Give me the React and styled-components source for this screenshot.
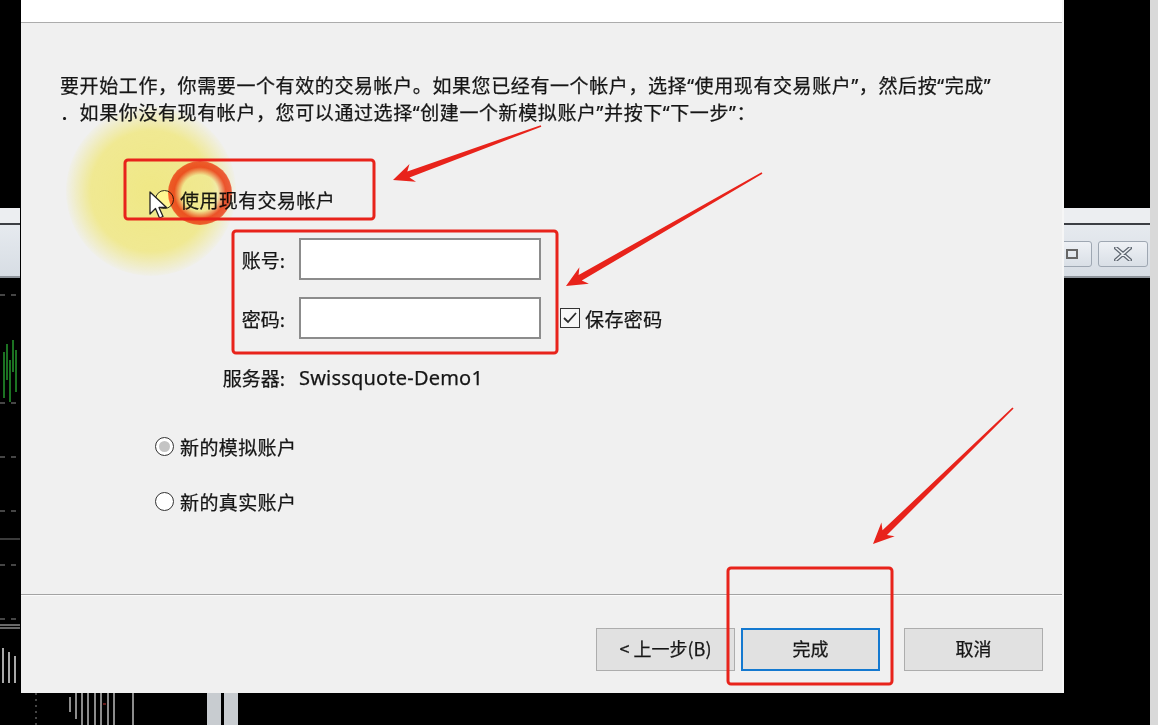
import React from "react";
import styled, { createGlobalStyle } from "styled-components";

const GlobalStyle = createGlobalStyle`
  html, body {
    margin: 0;
    padding: 0;
    background: #000;
    overflow: hidden;
  }
  body {
    font-family: "Noto Sans CJK SC", "Noto Sans", sans-serif;
    color: #161616;
    -webkit-text-stroke: 0.25px #161616;
  }
`;

const Desktop = styled.div`
  position: relative;
  width: 1158px;
  height: 725px;
  overflow: hidden;
  background: #000;
`;

const ChartLayer = styled.svg`
  position: absolute;
  inset: 0;
`;

const SideWindow = styled.div`
  position: absolute;
  top: 208px;
  left: ${(p) => p.$left}px;
  width: ${(p) => p.$width}px;
  height: 70px;
  display: flex;
  flex-direction: column;
  z-index: 1;
`;

const WinTop = styled.div`
  height: 15px;
  background: #eceef1;
`;

const WinRule = styled.div`
  height: 2px;
  background: #3c3f44;
`;

const WinBar = styled.div`
  flex: 1;
  display: flex;
  align-items: flex-start;
  justify-content: flex-end;
  gap: 6px;
  padding: 16px 10px 0 0;
  background: linear-gradient(#e6eaef, #d7dde4);
  border-bottom: 2px solid #8f959c;
`;

const CaptionButton = styled.div`
  width: ${(p) => p.$w}px;
  height: 26px;
  box-sizing: border-box;
  border: 1px solid #9ea7b2;
  border-radius: 3px;
  background: linear-gradient(#eef1f5, #d9dfe6);
  display: flex;
  align-items: center;
  justify-content: center;
`;

const EdgeStrip = styled.div`
  position: absolute;
  top: 0;
  right: 0;
  width: 8px;
  height: 100%;
  background: #d9d9d9;
  z-index: 1;
`;

const Dialog = styled.div`
  position: absolute;
  left: 21px;
  top: 0;
  width: 1041px;
  height: 693px;
  display: flex;
  flex-direction: column;
  background: #f0f0f0;
  border-right: 2px solid #f6f6f6;
  z-index: 2;
`;

const Header = styled.div`
  height: 22px;
  background: #fff;
  border-bottom: 1px solid #acacac;
`;

const Body = styled.div`
  flex: 1;
  display: flex;
  flex-direction: column;
  padding: 50px 0 0 39px;
  font-size: 19px;
`;

const Intro = styled.div`
  font-family: "Noto Sans", "Noto Sans CJK SC", sans-serif;
  line-height: 27px;
  letter-spacing: 0.6px;
  white-space: nowrap;
`;

const OptionRow = styled.label`
  display: flex;
  align-items: center;
  gap: 6px;
  height: 27px;
  margin-left: 95px;
  margin-top: ${(p) => p.$top}px;
  letter-spacing: 0.4px;
`;

const Radio = styled.span`
  width: 19px;
  height: 19px;
  box-sizing: border-box;
  border-radius: 50%;
  border: 1.5px solid #333;
  background: #fff;
  display: flex;
  align-items: center;
  justify-content: center;
  &::after {
    content: "";
    width: 11px;
    height: 11px;
    border-radius: 50%;
    background: ${(p) => (p.$on ? p.$dot : "transparent")};
  }
`;

const Fields = styled.div`
  display: flex;
  flex-direction: column;
  gap: 17px;
  margin: 25px 0 0 160px;
`;

const FieldRow = styled.div`
  display: flex;
  align-items: center;
  height: ${(p) => p.$h}px;
  margin-top: ${(p) => p.$top || 0}px;
`;

const FieldLabel = styled.span`
  width: 65px;
  margin-right: 14px;
  text-align: right;
  white-space: nowrap;
`;

const TextBox = styled.div`
  width: 242px;
  height: 42px;
  box-sizing: border-box;
  border: 2px solid #8c8c8c;
  background: #fff;
`;

const CheckRow = styled.label`
  display: flex;
  align-items: center;
  gap: 5px;
  margin-left: 19px;
  letter-spacing: 0.4px;
`;

const CheckBox = styled.span`
  width: 20px;
  height: 20px;
  box-sizing: border-box;
  border: 1.5px solid #333;
  background: #f7f7f7;
  display: flex;
  align-items: center;
  justify-content: center;
`;

const ServerName = styled.span`
  font-family: "Noto Sans", "Open Sans", sans-serif;
  font-size: 20px;
  letter-spacing: 0.2px;
`;

const Footer = styled.div`
  height: 99px;
  box-sizing: border-box;
  border-top: 1px solid #a3a3a3;
  box-shadow: inset 0 1px 0 #fbfbfb;
  display: flex;
  align-items: flex-start;
  justify-content: flex-end;
  padding: 33px 19px 0 0;
`;

const Button = styled.button`
  width: 139px;
  height: 43px;
  margin-left: ${(p) => p.$gap || 0}px;
  box-sizing: border-box;
  border: ${(p) => (p.$primary ? "2px solid #1479d0" : "1px solid #adadad")};
  background: #e1e1e1;
  font-family: "Noto Sans CJK SC", sans-serif;
  font-size: 18px;
  color: #161616;
  -webkit-text-stroke: 0.25px #161616;
  padding: 0 0 3px;
`;

const Highlight = styled.div`
  position: absolute;
  left: 66px;
  top: 106px;
  width: 170px;
  height: 170px;
  border-radius: 50%;
  background: radial-gradient(
    circle,
    rgba(255, 246, 130, 0.9) 0%,
    rgba(255, 246, 130, 0.8) 50%,
    rgba(255, 246, 130, 0) 72%
  );
  mix-blend-mode: multiply;
  z-index: 3;
`;

const ClickRing = styled.div`
  position: absolute;
  left: 168px;
  top: 161px;
  width: 64px;
  height: 64px;
  border-radius: 50%;
  background: radial-gradient(
    circle,
    rgba(255, 80, 40, 0) 40%,
    rgba(250, 72, 36, 0.9) 57%,
    rgba(250, 72, 36, 0.85) 68%,
    rgba(255, 80, 40, 0) 86%
  );
  mix-blend-mode: multiply;
  z-index: 4;
`;

const Pointer = styled.svg`
  position: absolute;
  left: 149px;
  top: 191px;
  z-index: 5;
`;

const Marks = styled.svg`
  position: absolute;
  inset: 0;
  z-index: 6;
  pointer-events: none;
`;

const RED = "#e8231b";

function arrowPoints(x1, y1, x2, y2, head = 21, wing = 9.5, neck = 3.2, tail = 0.8) {
  const dx = x2 - x1;
  const dy = y2 - y1;
  const len = Math.hypot(dx, dy);
  const ux = dx / len;
  const uy = dy / len;
  const nx = -uy;
  const ny = ux;
  const bx = x2 - ux * head;
  const by = y2 - uy * head;
  const kx = x2 - ux * head * 0.78;
  const ky = y2 - uy * head * 0.78;
  const pts = [
    [x1 + nx * tail, y1 + ny * tail],
    [kx + nx * neck, ky + ny * neck],
    [bx + nx * wing, by + ny * wing],
    [x2, y2],
    [bx - nx * wing, by - ny * wing],
    [kx - nx * neck, ky - ny * neck],
    [x1 - nx * tail, y1 - ny * tail],
  ];
  return pts.map((p) => p.map((v) => v.toFixed(1)).join(",")).join(" ");
}

const arrows = [
  [541, 126, 393, 180],
  [762, 173, 566, 286],
  [1013, 408, 873, 544],
];

const boxes = [
  [125, 160, 249, 59],
  [233, 231, 324, 122],
  [728, 568, 164, 116],
];

const greenCandles = [
  [4, 352, 398], [7, 344, 380], [10, 360, 402], [13, 340, 372], [16, 350, 392],
];

const whiteCandles = [
  [70, 697, 712], [76, 693, 719], [82, 693, 725], [88, 693, 725], [95, 693, 725],
  [101, 693, 725], [108, 693, 725], [114, 693, 725], [133, 693, 725],
];

function Chart() {
  return (
    <ChartLayer width="1158" height="725">
      {[295, 403, 457, 511, 565, 619].map((y) => (
        <line key={y} x1="0" y1={y} x2="20" y2={y} stroke="#8a8a8a" strokeDasharray="5 6" />
      ))}
      <line x1="0" y1="539" x2="20" y2="539" stroke="#777" />
      <line x1="0" y1="625" x2="20" y2="625" stroke="#cfcfcf" />
      <line x1="0" y1="628" x2="20" y2="628" stroke="#cfcfcf" />
      {greenCandles.map(([x, a, b]) => (
        <line key={x} x1={x} y1={a} x2={x} y2={b} stroke="#2fbf3a" strokeWidth="1.2" />
      ))}
      {[3, 9, 15].map((x, i) => (
        <line key={x} x1={x} y1={648 + i * 4} x2={x} y2={683} stroke="#e0e0e0" strokeWidth="1.5" />
      ))}
      <line x1="36" y1="693" x2="36" y2="725" stroke="#888" strokeDasharray="2 4" />
      {whiteCandles.map(([x, a, b]) => (
        <line key={x} x1={x} y1={a} x2={x} y2={b} stroke="#d8d8d8" strokeWidth="1.3" />
      ))}
      <line x1="103" y1="704" x2="106" y2="704" stroke="#c33" />
      <rect x="207" y="693" width="14" height="32" fill="#c8ccd0" />
      <rect x="224" y="693" width="14" height="32" fill="#c8ccd0" />
    </ChartLayer>
  );
}

export default function App() {
  return (
    <Desktop>
      <GlobalStyle />
      <Chart />

      <SideWindow $left={0} $width={20}>
        <WinTop />
        <WinRule />
        <WinBar />
      </SideWindow>

      <SideWindow $left={1030} $width={128}>
        <WinTop />
        <WinRule />
        <WinBar>
          <CaptionButton $w={40}>
            <svg width="12" height="10" viewBox="0 0 12 10">
              <rect x="1" y="1" width="10" height="8" fill="none" stroke="#666" strokeWidth="2" />
            </svg>
          </CaptionButton>
          <CaptionButton $w={50}>
            <svg width="18" height="14" viewBox="0 0 18 14">
              <path d="M2 1 L16 13 M16 1 L2 13" stroke="#5e6670" strokeWidth="4" strokeLinecap="round" />
              <path d="M2 1 L16 13 M16 1 L2 13" stroke="#eef1f5" strokeWidth="1.6" strokeLinecap="round" />
            </svg>
          </CaptionButton>
        </WinBar>
      </SideWindow>

      <EdgeStrip />

      <Dialog>
        <Header />
        <Body>
          <Intro>
            <div>要开始工作，你需要一个有效的交易帐户。如果您已经有一个帐户，选择“使用现有交易账户”，然后按“完成”</div>
            <div>．如果你没有现有帐户，您可以通过选择“创建一个新模拟账户”并按下“下一步”：</div>
          </Intro>

          <OptionRow $top={59}>
            <Radio />
            使用现有交易帐户
          </OptionRow>

          <Fields>
            <FieldRow $h={42}>
              <FieldLabel>账号:</FieldLabel>
              <TextBox />
            </FieldRow>
            <FieldRow $h={42}>
              <FieldLabel>密码:</FieldLabel>
              <TextBox />
              <CheckRow>
                <CheckBox>
                  <svg width="16" height="14" viewBox="0 0 16 14">
                    <path d="M2 7 L6 11 L14 2" fill="none" stroke="#2a2a2a" strokeWidth="1.8" />
                  </svg>
                </CheckBox>
                保存密码
              </CheckRow>
            </FieldRow>
            <FieldRow $h={27} $top={8}>
              <FieldLabel>服务器:</FieldLabel>
              <ServerName>Swissquote-Demo1</ServerName>
            </FieldRow>
          </Fields>

          <OptionRow $top={42}>
            <Radio $on $dot="#c4c4c4" />
            新的模拟账户
          </OptionRow>
          <OptionRow $top={28}>
            <Radio />
            新的真实账户
          </OptionRow>
        </Body>

        <Footer>
          <Button>&lt; 上一步(B)</Button>
          <Button $primary $gap={6}>完成</Button>
          <Button $gap={24}>取消</Button>
        </Footer>
      </Dialog>

      <Highlight />
      <ClickRing />
      <Pointer width="20" height="30" viewBox="0 0 20 30">
        <path
          d="M1 1 L1 23 L6.5 17.5 L10.5 27 L14 25.5 L10 16.5 L17.5 16.5 Z"
          fill="#fff"
          stroke="#222"
          strokeWidth="1.3"
          strokeLinejoin="round"
        />
      </Pointer>

      <Marks width="1158" height="725">
        {boxes.map(([x, y, w, h]) => (
          <rect key={x} x={x} y={y} width={w} height={h} rx="3" fill="none" stroke={RED} strokeWidth="3" />
        ))}
        {arrows.map(([a, b, c, d]) => (
          <polygon key={a} points={arrowPoints(a, b, c, d)} fill={RED} />
        ))}
      </Marks>
    </Desktop>
  );
}
